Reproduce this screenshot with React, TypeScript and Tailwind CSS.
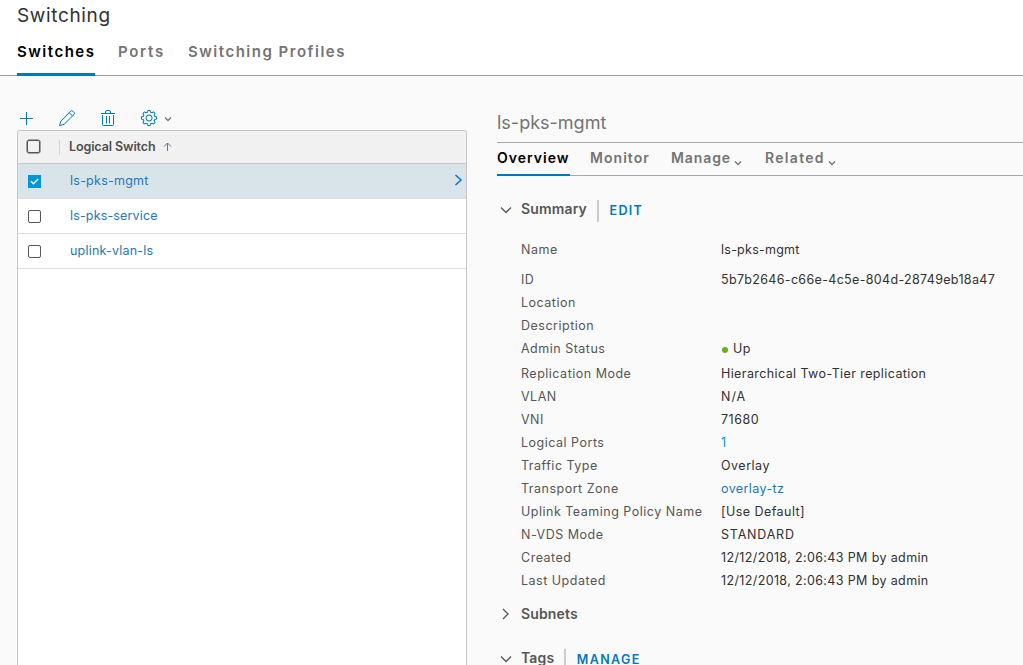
import React from "react";

type Tone = "text" | "link" | "count";

interface Field {
  label: string;
  value?: string;
  valueClass?: string;
  tone?: Tone;
  status?: boolean;
  gap?: string;
}

const fields: Field[] = [
  { label: "Name", value: "ls-pks-mgmt", valueClass: "tracking-[0.25px]", gap: "mb-[7px]" },
  { label: "ID", value: "5b7b2646-c66e-4c5e-804d-28749eb18a47", valueClass: "tracking-[0.33px]" },
  { label: "Location" },
  { label: "Description" },
  { label: "Admin Status", value: "Up", valueClass: "tracking-[0.5px]", status: true, gap: "mb-[2px]" },
  { label: "Replication Mode", value: "Hierarchical Two-Tier replication", valueClass: "tracking-[0.4px]" },
  { label: "VLAN", value: "N/A", valueClass: "tracking-[1px]" },
  { label: "VNI", value: "71680", valueClass: "tracking-[0.5px]" },
  { label: "Logical Ports", value: "1", tone: "count" },
  { label: "Traffic Type", value: "Overlay", valueClass: "tracking-[0.5px]" },
  { label: "Transport Zone", value: "overlay-tz", valueClass: "tracking-[0.4px]", tone: "link" },
  { label: "Uplink Teaming Policy Name", value: "[Use Default]", valueClass: "tracking-[0.45px]" },
  { label: "N-VDS Mode", value: "STANDARD", valueClass: "tracking-[0.8px]" },
  { label: "Created", value: "12/12/2018, 2:06:43 PM by admin", valueClass: "tracking-[0.37px]" },
  { label: "Last Updated", value: "12/12/2018, 2:06:43 PM by admin", valueClass: "tracking-[0.37px]" },
];

const tones: Record<Tone, string> = {
  text: "text-[#313131]",
  link: "text-[#1a79bb]",
  count: "text-[#0095d3]",
};

function Chevron({ dir, className }: { dir: "down" | "right"; className: string }) {
  return (
    <svg viewBox="0 0 12 12" className={className} fill="none" stroke="currentColor" strokeWidth="1.3">
      <path d={dir === "down" ? "M1 3.5 6 8.5 11 3.5" : "M3 1 8 6 3 11"} />
    </svg>
  );
}

function SmallChevron({ className }: { className: string }) {
  return (
    <svg viewBox="0 0 8 8" className={`h-2 w-2 ${className}`} fill="none" stroke="currentColor" strokeWidth="1.3">
      <path d="M1 2.500 4 5.500 7 2.500" />
    </svg>
  );
}

function Plus() {
  return (
    <svg viewBox="0 0 14 14" className="h-3.5 w-3.5" fill="none" stroke="currentColor">
      <path d="M7.5 1v13M1 7.5h13" />
    </svg>
  );
}

function Pencil() {
  return (
    <svg viewBox="0 0 18 18" className="h-[18px] w-[18px]" fill="none" stroke="currentColor" strokeLinejoin="round">
      <path d="M1.5 16.600 2.900 12.1 12.700 2.2Q13.800 1.1 14.900 2.2L16 3.3Q17.1 4.4 16 5.5L6.100 15.300ZM11.200 3.7l3.3 3.3" />
    </svg>
  );
}

function Trash() {
  return (
    <svg viewBox="0 0 16 18" className="h-[18px] w-4" fill="none" stroke="currentColor">
      <path d="M1 4.500h14M5.5 4.500V3Q5.500 1.500 7 1.500h2Q10.500 1.500 10.500 3v1.500M2.5 6v9.500Q2.500 16.500 3.500 16.500h9Q13.500 16.500 13.500 15.500V6M6.500 7v7.500M9.500 7v7.500" />
    </svg>
  );
}

function Gear() {
  return (
    <svg viewBox="0 0 36 36" className="h-[18px] w-[18px]" fill="currentColor">
      <path d="M18.1 11c-3.900 0-7 3.100-7 7s3.100 7 7 7 7-3.100 7-7-3.100-7-7-7zm0 12c-2.800 0-5-2.200-5-5s2.200-5 5-5 5 2.200 5 5-2.200 5-5 5z" />
      <path d="M32.800 14.700 30 13.800l-.6-1.500 1.400-2.600c.3-.6.2-1.400-.3-1.900l-2.400-2.400c-.5-.5-1.300-.6-1.900-.3l-2.600 1.400-1.500-.6-.9-2.800C21 2.500 20.400 2 19.700 2h-3.400c-.7 0-1.300.5-1.400 1.200L14 6l-1.600.6L9.800 5.200c-.6-.3-1.400-.2-1.900.3L5.500 7.900c-.5.5-.6 1.300-.3 1.900l1.300 2.500-.5 1.500-2.800.9C2.500 14.900 2 15.500 2 16.200v3.400c0 .7.500 1.300 1.200 1.500l2.800.9.600 1.500-1.400 2.600c-.3.600-.2 1.400.3 1.900l2.400 2.400c.5.500 1.300.6 1.900.3l2.600-1.400 1.500.6.900 2.900c.2.600.8 1.100 1.500 1.100h3.400c.7 0 1.300-.5 1.500-1.100l.9-2.900 1.500-.6 2.600 1.400c.6.300 1.400.2 1.900-.3l2.400-2.400c.5-.5.600-1.300.3-1.900l-1.400-2.600.6-1.500 2.900-.9c.6-.2 1.100-.8 1.100-1.500v-3.400c0-.7-.5-1.300-1.200-1.400zm-.8 4.700-3.600 1.100-.1.500-.9 2.100-.3.500 1.800 3.300-2 2-3.300-1.800-.5.300c-.7.400-1.400.7-2.100.9l-.5.100-1.100 3.600h-2.800l-1.100-3.600-.5-.1-2.100-.9-.5-.3-3.300 1.800-2-2 1.800-3.300-.3-.5c-.4-.7-.7-1.400-.9-2.100l-.1-.5L4 19.400v-2.800l3.400-1 .2-.5c.2-.8.500-1.500.9-2.200l.3-.5-1.700-3.300 2-2 3.200 1.800.5-.3c.7-.4 1.400-.7 2.200-.9l.5-.2L16.600 4h2.800l1.100 3.500.5.200c.7.200 1.400.5 2.100.9l.5.300 3.300-1.800 2 2-1.800 3.300.3.500c.4.700.7 1.400.9 2.100l.1.500 3.600 1.100z" />
    </svg>
  );
}

function Box({ checked = false, className }: { checked?: boolean; className: string }) {
  if (checked) {
    return (
      <span className={`flex items-center justify-center bg-[#0095d3] ${className}`}>
        <svg viewBox="0 0 13 13" className="h-[13px] w-[13px]" fill="none" stroke="#fff" strokeWidth="1.6">
          <path d="M3 6.300 5.400 8.700 10.200 4" />
        </svg>
      </span>
    );
  }
  return <span className={`rounded-[2px] border border-[#565656] ${className}`} />;
}

function SwitchRow({ name, selected = false, spacing }: { name: string; selected?: boolean; spacing: string }) {
  return (
    <div className={`flex h-[35px] items-center border-b border-[#ddd] pr-[3px] pl-[10px] ${selected ? "bg-[#d9e4ea]" : "bg-white"}`}>
      <Box checked={selected} className="mt-px h-[13px] w-[13px]" />
      <span className={`ml-[29px] text-[12.5px] text-[#1a79bb] ${spacing}`}>{name}</span>
      {selected && (
        <svg viewBox="0 0 9 12" className="mb-[2px] ml-auto h-3 w-[9px]" fill="none" stroke="#0079b8" strokeWidth="1.5">
          <path d="M1.500 1 7 6 1.500 11" />
        </svg>
      )}
    </div>
  );
}

function FieldRow({ f }: { f: Field }) {
  return (
    <div className={`flex h-[23px] items-center text-[12.5px] whitespace-nowrap ${f.gap ?? ""}`}>
      <span className="w-[200px] shrink-0 tracking-[0.5px] text-[#565656]">{f.label}</span>
      {f.status && <span className="mt-px mr-[5px] ml-px h-[6px] w-[6px] rounded-full bg-[#60b515]" />}
      <span className={`${tones[f.tone ?? "text"]} ${f.valueClass ?? ""}`}>{f.value}</span>
    </div>
  );
}

function SectionHead({ title, open, action, className }: { title: string; open: boolean; action?: string; className: string }) {
  return (
    <div className={`flex h-[24px] shrink-0 items-center ${className}`}>
      <Chevron dir={open ? "down" : "right"} className="ml-[3px] h-3 w-3 text-[#565656]" />
      <span className={`ml-[9px] text-[14px] leading-[18px] font-semibold tracking-[0.150px] text-[#565656] ${open ? "mb-[2px]" : ""}`}>
        {title}
      </span>
      {action && (
        <>
          <span className="mt-px ml-[10px] h-[22px] w-[2px] bg-[#ccc]" />
          <button className="mt-px ml-[10.5px] text-[12.5px] leading-[13px] font-semibold tracking-[1.350px] text-[#0079b8]">{action}</button>
        </>
      )}
    </div>
  );
}

export default function App() {
  return (
    <div className="flex h-[665px] w-[1023px] flex-col overflow-hidden bg-[#fafafa] font-['Inter',sans-serif] text-[13px] whitespace-nowrap">
      <header className="flex h-[76px] shrink-0 flex-col border-b border-[#9a9a9a] bg-white pl-[17px]">
        <h1 className="h-[30px] text-[19px] leading-[32px] tracking-[0.65px] text-[#313131]">Switching</h1>
        <nav className="-mb-px flex h-[46px] gap-[23px] text-[15px] leading-[43px] font-semibold text-[#747474]">
          <a className="w-[78px] border-b-[3px] border-[#0079b8] tracking-[1.500px] text-black">Switches</a>
          <a className="w-[47px] tracking-[1.700px]">Ports</a>
          <a className="tracking-[1.500px]">Switching Profiles</a>
        </nav>
      </header>

      <main className="flex min-h-0 flex-1">
        <section className="ml-[17px] flex w-[450px] flex-col pt-[31px]">
          <div className="mb-px flex h-[22px] items-center pl-[2px] text-[#0079b8]">
            <Plus />
            <span className="ml-[25px]"><Pencil /></span>
            <span className="ml-[24px]"><Trash /></span>
            <span className="ml-[24px]"><Gear /></span>
            <SmallChevron className="mt-[2px] ml-[6px] text-[#747474]" />
          </div>
          <div className="flex flex-1 flex-col rounded-t-[3px] border border-b-0 border-[#c8c8c8] bg-white">
            <div className="flex h-[33px] items-center rounded-t-[2px] border-b border-[#c8c8c8] bg-[#f1f1f1] pl-[9px]">
              <Box className="mb-[2px] h-[13px] w-[13px] shadow-[0_0_0_0.5px_#565656]" />
              <span className="ml-[19px] h-[15px] w-px bg-[#d5d5d5]" />
              <span className="ml-[9px] text-[12.5px] font-semibold tracking-[-0.1px] text-[#4f4f4f]">Logical Switch</span>
              <svg viewBox="0 0 9 9" className="mb-[2px] ml-[7px] h-[9px] w-[9px]" fill="none" stroke="#66788c">
                <path d="M4.500 9V1M1 4.500 4.500 1 8 4.500" />
              </svg>
            </div>
            <SwitchRow name="ls-pks-mgmt" selected spacing="tracking-[0.25px]" />
            <SwitchRow name="ls-pks-service" spacing="tracking-[0.150px]" />
            <SwitchRow name="uplink-vlan-ls" spacing="tracking-[0.2px]" />
          </div>
        </section>

        <section className="ml-[30px] flex min-w-0 flex-1 flex-col pt-[32px]">
          <h2 className="h-[34px] shrink-0 text-[18px] leading-[30px] text-[#747474]">ls-pks-mgmt</h2>
          <nav className="flex h-[34px] shrink-0 border-y border-[#a8a8a8] text-[14px] leading-[29px] font-semibold text-[#747474]">
            <a className="-mb-px h-[33px] w-[73px] shrink-0 border-b-2 border-[#0079b8] tracking-[1px] text-black">Overview</a>
            <a className="ml-5 w-[60px] tracking-[1.050px]">Monitor</a>
            <a className="ml-[21px] flex w-[74px]">
              <span className="w-[63px] tracking-[0.900px]">Manage</span>
              <SmallChevron className="mt-[16px]" />
            </a>
            <a className="ml-[20px] flex">
              <span className="w-[63px] tracking-[1.300px]">Related</span>
              <SmallChevron className="mt-[16px]" />
            </a>
          </nav>

          <SectionHead title="Summary" open action="EDIT" className="mt-[22px]" />

          <div className="mt-[17px] pl-[24px]">
            {fields.map((f) => (
              <FieldRow key={f.label} f={f} />
            ))}
          </div>

          <SectionHead title="Subnets" open={false} className="mt-[9px]" />
          <SectionHead title="Tags" open action="MANAGE" className="mt-[21px]" />
        </section>
      </main>
    </div>
  );
}
